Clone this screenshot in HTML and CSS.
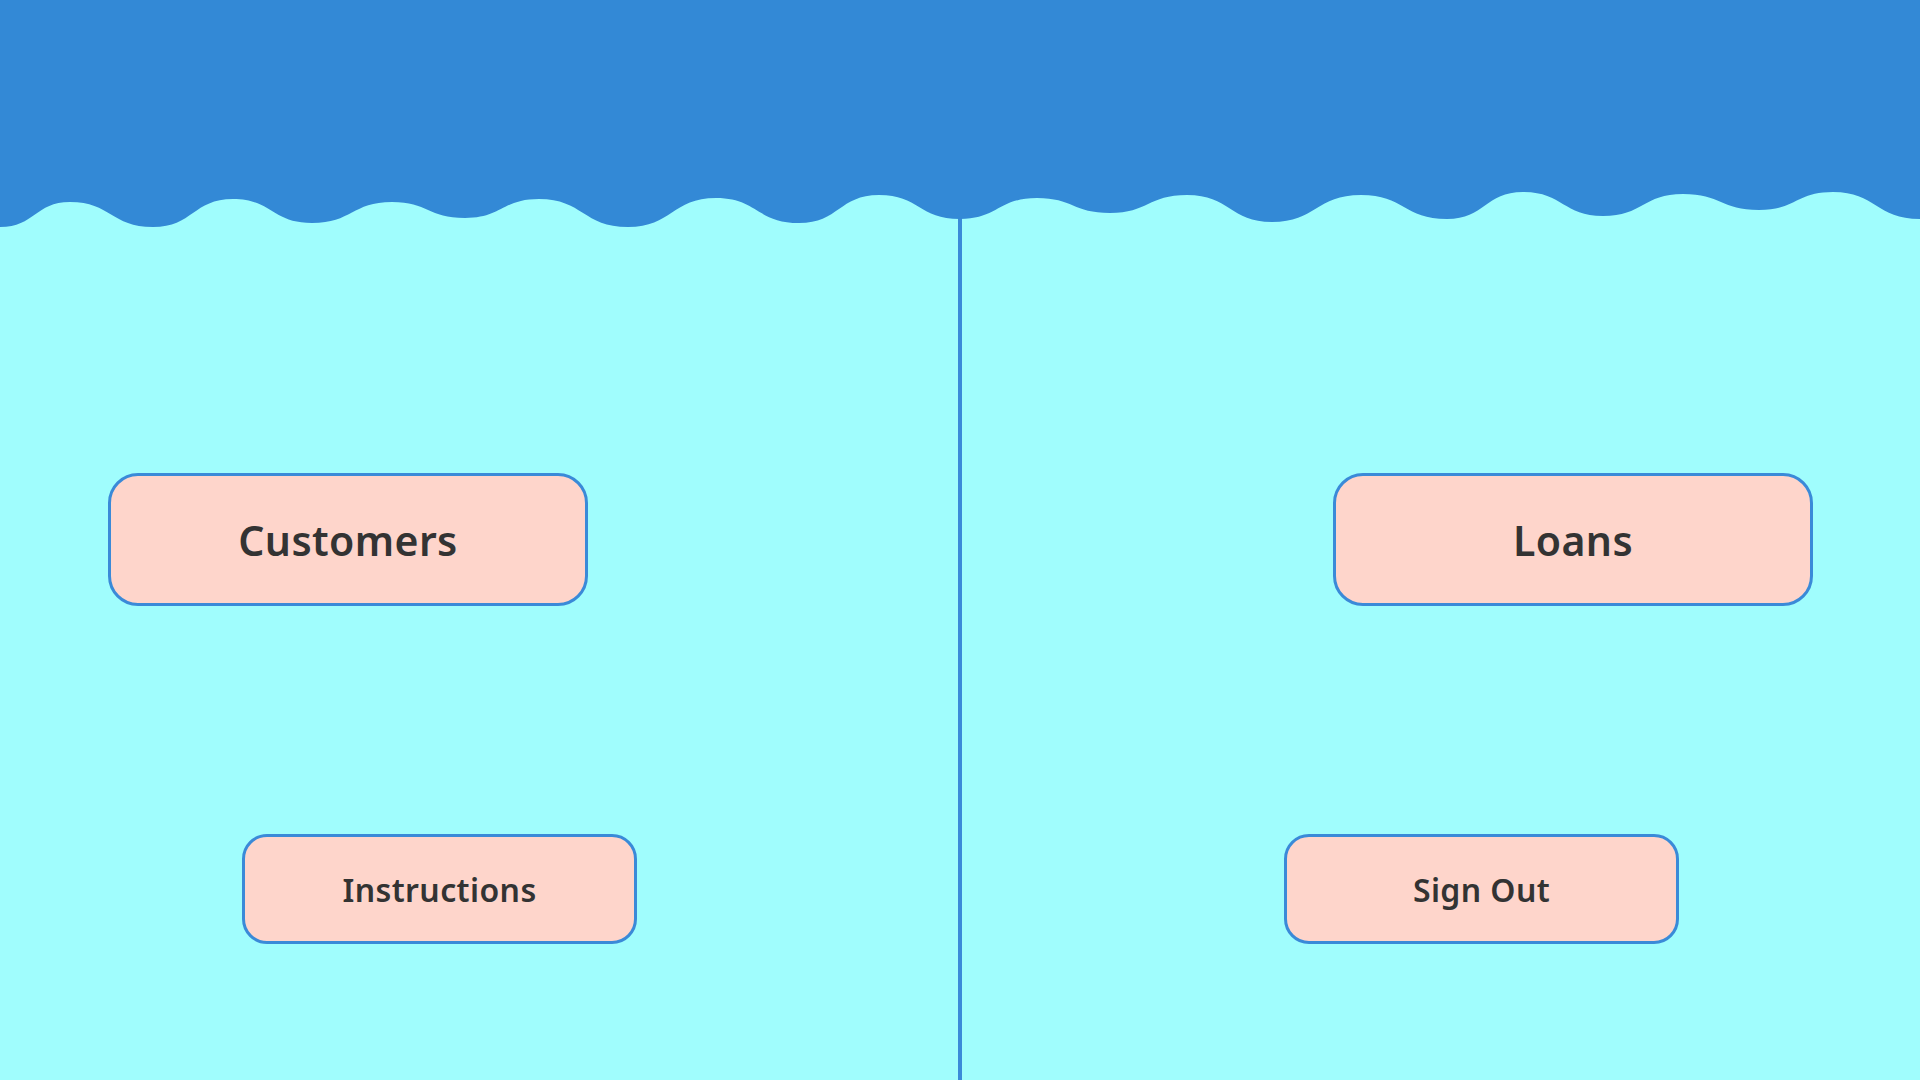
FILE: index.html
```html
<!DOCTYPE html>
<html lang="en">
<head>
<meta charset="utf-8">
<title>Menu</title>
<link rel="stylesheet" href="styles.css">
</head>
<body>
<div class="page">
  <svg class="wave" width="1920" height="230" viewBox="0 0 1920 230" aria-hidden="true">
    <path fill="#3389d6" d="M0 0 H1920 V219
      C1876 219 1876 192 1833 192
      C1796 192 1796 210 1759 210
      C1721 210 1721 194 1683 194
      C1643 194 1643 216 1603 216
      C1563 216 1563 192 1523 192
      C1485 192 1485 219 1447 219
      C1404 219 1404 195 1361 195
      C1316 195 1316 222 1272 222
      C1230 222 1230 195 1187 195
      C1148 195 1148 213 1110 213
      C1073 213 1073 198 1037 198
      C998 198 998 219 960 219
      C919 219 919 195 879 195
      C839 195 839 223 799 223
      C757 223 757 198 716 198
      C672 198 672 227 628 227
      C583 227 583 199 539 199
      C502 199 502 218 465 218
      C428 218 428 202 392 202
      C352 202 352 223 312 223
      C272 223 272 199 233 199
      C193 199 193 227 153 227
      C111 227 111 202 70 202
      C35 202 35 227 0 227 Z"/>
  </svg>
  <main class="columns">
    <section class="col col-left">
      <button class="btn btn-big btn-customers">Customers</button>
      <button class="btn btn-small btn-instructions">Instructions</button>
    </section>
    <div class="divider"></div>
    <section class="col col-right">
      <button class="btn btn-big btn-loans">Loans</button>
      <button class="btn btn-small btn-signout">Sign Out</button>
    </section>
  </main>
</div>
</body>
</html>
```
FILE: styles.css
```css
* { box-sizing: border-box; }
html, body {
  margin: 0;
  padding: 0;
  width: 1920px;
  height: 1080px;
  overflow: hidden;
  background: #a0fdfd;
  font-family: "Noto Sans", "Open Sans", sans-serif;
}
.page {
  position: relative;
  width: 1920px;
  height: 1080px;
}
.wave {
  position: absolute;
  top: 0;
  left: 0;
  display: block;
  z-index: 2;
}
.columns {
  display: flex;
  height: 1080px;
}
.col {
  width: 958px;
  display: flex;
  flex-direction: column;
  align-items: flex-start;
  padding-top: 473px;
  gap: 228px;
}
.divider {
  width: 4px;
  background: #3a8ad8;
}
.btn {
  display: flex;
  align-items: center;
  justify-content: center;
  background: #fed5cb;
  border: 3.5px solid #3a8ad8;
  color: #333333;
  font-family: inherit;
  font-weight: 600;
  padding: 0;
  cursor: pointer;
}
.btn-big {
  width: 480px;
  height: 133px;
  border-radius: 30px;
  font-size: 41px;
  letter-spacing: 0.4px;
}
.btn-small {
  width: 395px;
  height: 110px;
  border-radius: 25px;
  font-size: 32px;
  letter-spacing: 0.4px;
}
.btn-customers { margin-left: 108px; }
.btn-instructions { margin-left: 242px; }
.btn-loans { margin-left: 371px; }
.btn-signout { margin-left: 322px; }
```
